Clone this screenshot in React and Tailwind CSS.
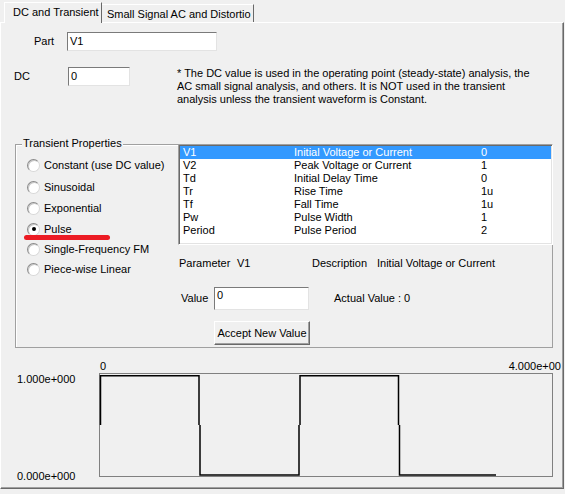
import React from 'react';

const rows = [
  ['V1', 'Initial Voltage or Current', '0'],
  ['V2', 'Peak Voltage or Current', '1'],
  ['Td', 'Initial Delay Time', '0'],
  ['Tr', 'Rise Time', '1u'],
  ['Tf', 'Fall Time', '1u'],
  ['Pw', 'Pulse Width', '1'],
  ['Period', 'Pulse Period', '2'],
];

const radios = [
  { label: 'Constant (use DC value)', h: 'h-[21px]' },
  { label: 'Sinusoidal', h: 'h-[22px]' },
  { label: 'Exponential', h: 'h-[21px]' },
  { label: 'Pulse', h: 'h-[20px]', checked: true },
  { label: 'Single-Frequency FM', h: 'h-[20px]' },
  { label: 'Piece-wise Linear', h: 'h-[20px]' },
];

const Radio = ({ checked }) => (
  <div className="w-[13px] h-[13px] rounded-full border border-t-[#8a8a8a] border-l-[#8a8a8a] border-r-[#d8d8d8] border-b-[#d8d8d8] bg-white shadow-[inset_1px_1px_0_#c8c8c8] flex items-center justify-center shrink-0">
    {checked && <div className="w-[4px] h-[4px] rounded-full bg-black" />}
  </div>
);

const TextBox = ({ value, className }) => (
  <div className={`bg-white border border-t-[#7a7a7a] border-l-[#7a7a7a] border-r-[#e3e3e3] border-b-[#e3e3e3] pl-[2px] ${className}`}>
    {value}
  </div>
);

export default function App() {
  return (
    <div className="w-[565px] h-[494px] bg-[#f0f0f0] text-[11px] leading-[13px] text-black font-['Liberation_Sans',Arial,sans-serif] overflow-hidden">
      {/* Tabs */}
      <div className="flex items-end h-[22px] pl-[4px]">
        <div className="relative z-10 w-[98px] h-[21px] -mb-[1px] bg-[#f0f0f0] border-t border-l border-white border-r border-r-[#696969] pl-[8px] pt-[3px] whitespace-nowrap">
          DC and Transient
        </div>
        <div className="w-[152px] h-[18px] border-t border-white border-r border-r-[#696969] pl-[5px] pt-[3px] whitespace-nowrap">
          Small Signal AC and Distortio
        </div>
      </div>

      {/* Panel */}
      <div className="w-[564px] h-[467px] border-t border-l border-white border-r border-b border-r-[#696969] border-b-[#696969] shadow-[inset_-1px_-1px_0_#a0a0a0]">
        <div className="flex items-center mt-[9px]">
          <div className="ml-[33px] w-[33px]">Part</div>
          <TextBox value="V1" className="w-[150px] h-[19px] leading-[17px]" />
        </div>

        <div className="flex items-start mt-[16px]">
          <div className="ml-[13px] w-[54px] leading-[19px]">DC</div>
          <TextBox value="0" className="w-[62px] h-[19px] leading-[17px]" />
          <p className="ml-[47px] w-[362px]">
            * The DC value is used in the operating point (steady-state) analysis, the AC small signal analysis, and others. It is NOT used in the transient analysis unless the transient waveform is Constant.
          </p>
        </div>

        {/* Transient Properties group */}
        <div className="relative ml-[14px] mt-[38px] w-[538px] h-[204px] border border-[#a0a0a0] shadow-[inset_1px_1px_0_#ffffff]">
          <div className="absolute left-[6px] -top-[8px] px-[1px] bg-[#f0f0f0]">Transient Properties</div>
          <div className="absolute left-[8px] top-[90px] w-[86px] h-[5px] rounded-full bg-[#ec1c24]" />
          <div className="flex">
            <div className="w-[162px] pl-[11px] pt-[10px]">
              {radios.map((r) => (
                <div key={r.label} className={`flex items-center ${r.h}`}>
                  <Radio checked={r.checked} />
                  <span className="ml-[4px] whitespace-nowrap">{r.label}</span>
                </div>
              ))}
            </div>
            <div className="w-[375px] -mt-[1px] -mr-[1px]">
              <div className="h-[101px] bg-white border border-t-[#a0a0a0] border-l-[#a0a0a0] border-r-white border-b-white shadow-[inset_1px_1px_0_#696969,inset_-1px_-1px_0_#e3e3e3] p-[1px]">
                {rows.map(([a, b, c], i) => (
                  <div key={a} className={`flex h-[13px] pl-[3px] ${i === 0 ? 'bg-[#3399ff] text-white' : ''}`}>
                    <span className="w-[111px]">{a}</span>
                    <span className="w-[187px]">{b}</span>
                    <span>{c}</span>
                  </div>
                ))}
              </div>

              <div className="flex mt-[12px] pl-[1px] whitespace-nowrap">
                <span className="w-[58px]">Parameter</span>
                <span className="w-[75px]">V1</span>
                <span className="w-[65px]">Description</span>
                <span>Initial Voltage or Current</span>
              </div>

              <div className="flex items-center mt-[17px]">
                <div className="w-[36px] pl-[3px]">Value</div>
                <TextBox value="0" className="w-[95px] h-[23px] pt-[1px]" />
                <div className="ml-[25px]">Actual Value : 0</div>
              </div>

              <button className="mt-[11px] ml-[36px] w-[96px] h-[24px] bg-[#f0f0f0] border border-t-white border-l-white border-r-[#696969] border-b-[#696969] shadow-[inset_-1px_-1px_0_#a0a0a0] text-[11px] leading-[13px] whitespace-nowrap">
                Accept New Value
              </button>
            </div>
          </div>
        </div>

        {/* Waveform preview */}
        <div className="flex justify-between mt-[12px] pl-[99px] pr-[2px]">
          <span>0</span>
          <span>4.000e+00</span>
        </div>
        <div className="flex">
          <div className="w-[97px] h-[110px] pl-[16px] flex flex-col justify-between">
            <span>1.000e+000</span>
            <span>0.000e+000</span>
          </div>
          <svg width="462" height="106" viewBox="0 0 462 106">
            <rect x="1.5" y="0.5" width="453" height="103" fill="none" stroke="#808080" strokeWidth="1" />
            <g fill="none" stroke="#000" strokeWidth="1.5">
              <path d="M2.5 52 L2.5 2.75 L101 2.75 L101 52" />
              <path d="M102 52 L102 102 L201 102 L201 52" />
              <path d="M202 52 L202 2.75 L300.5 2.75 L300.5 52" />
              <path d="M301.5 52 L301.5 102 L398 102" />
            </g>
          </svg>
        </div>
      </div>
    </div>
  );
}
